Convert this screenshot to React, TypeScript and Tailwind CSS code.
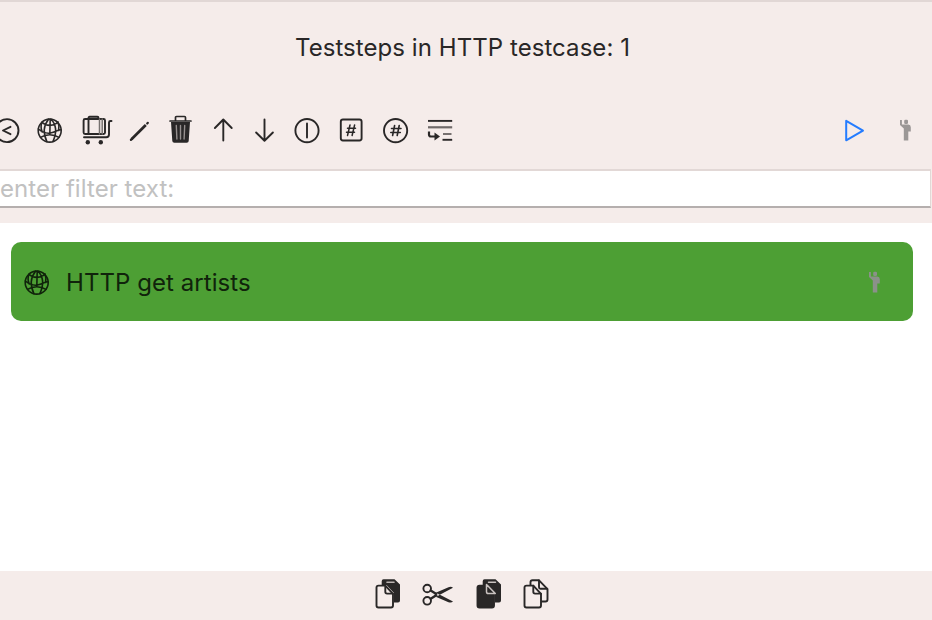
import React from "react";

type IconProps = { className?: string; children: React.ReactNode };

function Icon({ className = "", children }: IconProps) {
  return (
    <svg
      viewBox="0 0 32 32"
      className={`size-8 shrink-0 ${className}`}
      fill="none"
      stroke="currentColor"
      strokeWidth="1.9"
      strokeLinecap="round"
      strokeLinejoin="round"
    >
      {children}
    </svg>
  );
}

function Globe({ className }: { className?: string }) {
  return (
    <Icon className={className}>
      <g strokeWidth="1.6">
        <circle cx="15.7" cy="15.6" r="11.5" />
        <path d="M14.500 4.200c-4 5-6 13-1.600 22.400M17 4.200c5 5 6 13 2 22.200M16.200 4.200l-.4 15.500M8 7.200c4 4 12 4.500 16-.4M4.300 14c5 4 10 5 14 3.500s6-2.500 8.700-2.700M6.500 22.300c5.500-3.500 13-3.500 18.500 0M8 7.200c-1.200 3-1 7 .2 9.700M24 7.500c1.400 3 1.200 5.500.6 8" />
      </g>
    </Icon>
  );
}

function Person({ className }: { className?: string }) {
  return (
    <Icon className={className}>
      <g fill="currentColor" stroke="none">
        <rect x="15.200" y="4.700" width="3.800" height="4.400" rx="1.300" />
        <path d="M11 5h1.900v4.600h6.400q2.500.2 2.500 2.600v4.300h-2.500v9h-4.500V13.400L11 10z" />
      </g>
    </Icon>
  );
}

const BACK_PAGE = "M10.500 2.200H21.500L27 7.500V23.500q0 2-2 2H21V16l-7.500-8H8.700V4.200q0-2 1.800-2z";
const FRONT_PAGE = "M5.500 8.600h6.800l7.700 8.200v11.700q0 2-2 2H5.500q-2 0-2-2V10.600q0-2 2-2z";

export default function App() {
  return (
    <div className="flex h-[620px] w-[932px] flex-col overflow-hidden bg-[#f5ecea] font-['Inter','Liberation_Sans',sans-serif] text-[24px] text-[#292727]">
      <header className="flex h-[97px] shrink-0 items-center justify-center border-t-2 border-[#e1d7d5]">
        <h1 className="-mt-[3px] mr-[7px] whitespace-nowrap tracking-[0.06px]">Teststeps in HTTP testcase: 1</h1>
      </header>

      <div className="flex h-[72px] shrink-0 items-start pt-[18px]">
        <Icon className="-ml-[9px]">
          <circle cx="16" cy="15.600" r="11.500" />
          <path d="m19.500 11.800-7.500 3.700 7.500 3.700" />
        </Icon>
        <Globe className="ml-[11px]" />
        <Icon className="ml-[15px]">
          <path d="M30.500 6h-1q-1.500 0-1.500 1.500v12q0 2.700-2.700 2.700H3" />
          <rect x="2.600" y="4" width="21.400" height="15" rx="1.500" />
          <path d="M7.500 4V3q0-1.200 1.200-1.200h7.600q1.200 0 1.200 1.200v1M7.500 4v15" />
          <path d="M18.500 4v15M21.200 4v15" stroke="#777270" strokeWidth="1.500" />
          <g fill="currentColor" stroke="none"><circle cx="6.800" cy="27.300" r="2.200" /><circle cx="19.800" cy="27.300" r="2.200" /></g>
        </Icon>
        <Icon className="ml-[11px]">
          <path d="M7.500 24.200 21.800 10" strokeWidth="2.700" strokeLinecap="butt" />
          <path d="m6.900 24.900 1.200-1.200M23.200 8.500l.6-.6" strokeWidth="2.200" />
        </Icon>
        <Icon className="ml-[9px]">
          <path d="M5 6h21M10.500 5.500v-3q0-1 1-1h8q1 0 1 1v3" strokeWidth="1.700" />
          <path d="M6 7h19l-1.300 19q-.1 1.800-2 1.800H9.300q-1.800 0-2-1.800z" fill="currentColor" stroke="none" />
          <path d="m11.300 10.500.6 13.500M15.500 10.500V24M19.700 10.500 19.100 24" stroke="#96908f" strokeWidth="1.400" />
        </Icon>
        <Icon className="ml-[10px]"><path d="M16.300 25.500V4.500M7.900 13l8.400-8.500 8.400 8.500" /></Icon>
        <Icon className="ml-[10px]"><path d="M15.500 4.500v21M7.100 17.500l8.400 8.300 8.400-8.300" /></Icon>
        <Icon className="ml-[10px]"><circle cx="16" cy="15.600" r="11.600" /><path d="M16 8.500v14" /></Icon>
        <Icon className="ml-[12px]">
          <rect x="5.800" y="4.500" width="20.800" height="21" rx="2.200" />
          <path d="m15 10-2.500 10.500M19.600 10l-2.500 10.500M12.500 13.300h8M11.500 17.200h8" strokeWidth="1.500" />
        </Icon>
        <Icon className="ml-[13px]">
          <circle cx="15.600" cy="15.600" r="11.600" />
          <path d="m14.600 10.500-2 10M19.200 10.500l-2 10M11.500 13.500h9.500M10.800 17.500h9.500" strokeWidth="1.600" />
        </Icon>
        <Icon className="ml-[13px]">
          <g strokeLinecap="butt">
            <path d="M3 5.900h24.200" />
            <path d="M3 12.300h24.200" stroke="#6f6a69" strokeWidth="2.200" />
            <path d="M18 19h8.500" stroke="#6f6a69" />
            <path d="M17.500 24.800h9.700" />
            <path d="M4 16.500v3q0 2 2 2h5" strokeWidth="2.200" />
          </g>
          <path d="M9.500 17.400v8.200l5.500-4.100z" fill="currentColor" stroke="none" />
        </Icon>
        <Icon className="ml-[382px] text-[#247cff]"><path d="M7.200 5.800v19.500L24 15.700z" strokeWidth="2" /></Icon>
        <Person className="ml-[18px] text-[#9b9796]" />
      </div>

      <div className="flex h-[54px] shrink-0">
        <input
          type="text"
          placeholder="enter filter text:"
          className="h-[39px] w-[931px] rounded-none border-y-2 border-r border-t-[#e2d8d6] border-r-[#e2d8d6] border-b-[#b5afae] bg-white tracking-[0.06px] outline-none placeholder:text-[#c1c1c1]"
        />
      </div>

      <main className="flex-1 bg-white pt-[19px] pr-[19px] pl-[11px]">
        <div className="flex h-[79px] items-center rounded-[10px] bg-[#4d9f34] pt-[2px] text-[#10230b]">
          <Globe className="ml-[10px]" />
          <span className="ml-[13px] flex-1 tracking-[0.06px]">HTTP get artists</span>
          <Person className="mr-[23px] text-[#8b918a]" />
        </div>
      </main>

      <footer className="flex h-[49px] shrink-0 items-start pt-[6px] pl-[373px]">
        <Icon>
          <path d={BACK_PAGE} fill="currentColor" stroke="none" />
          <path d={FRONT_PAGE} fill="#f5ecea" />
          <path d="M12.300 8.800v6q0 1.800 1.800 1.800H20" />
          <path d="M14 5.200h7" stroke="#bbb4b2" strokeWidth="1.600" />
        </Icon>
        <Icon className="ml-[16px]">
          <circle cx="6.200" cy="11.500" r="3.800" />
          <circle cx="6.200" cy="23.800" r="3.800" />
          <path d="m9.700 13.500 6 3.700M9.700 21.800l6-3.700" strokeWidth="2.400" />
          <path d="M13 16.400 27.500 10.200q2.800-1 4.500.6L15.500 19.500zM13 19 27.500 25.200q2.800 1 4.500-.6L15.500 15.900z" fill="currentColor" stroke="none" />
          <circle cx="16.800" cy="17.700" r="1" fill="#c9c2c0" stroke="none" />
        </Icon>
        <Icon className="ml-[21px]">
          <path d={BACK_PAGE} fill="currentColor" stroke="none" />
          <path d={FRONT_PAGE} fill="currentColor" />
          <path d="M12.500 7.500v7.300q0 1.800 1.800 1.800h7zM14.500 5.200h7" stroke="#c9c2c0" strokeWidth="1.500" />
        </Icon>
        <Icon className="ml-[15px]">
          <path d="M9.500 8V5.200q0-2 2-2h6.300l8.700 9V22.500q0 2-2 2H20" />
          <path d="M18 3.500v6.700q0 1.500 1.500 1.500h6.700" />
          <path d={FRONT_PAGE} fill="#f5ecea" />
          <path d="M12.300 8.800v6q0 1.800 1.800 1.800H20" />
        </Icon>
      </footer>
    </div>
  );
}
